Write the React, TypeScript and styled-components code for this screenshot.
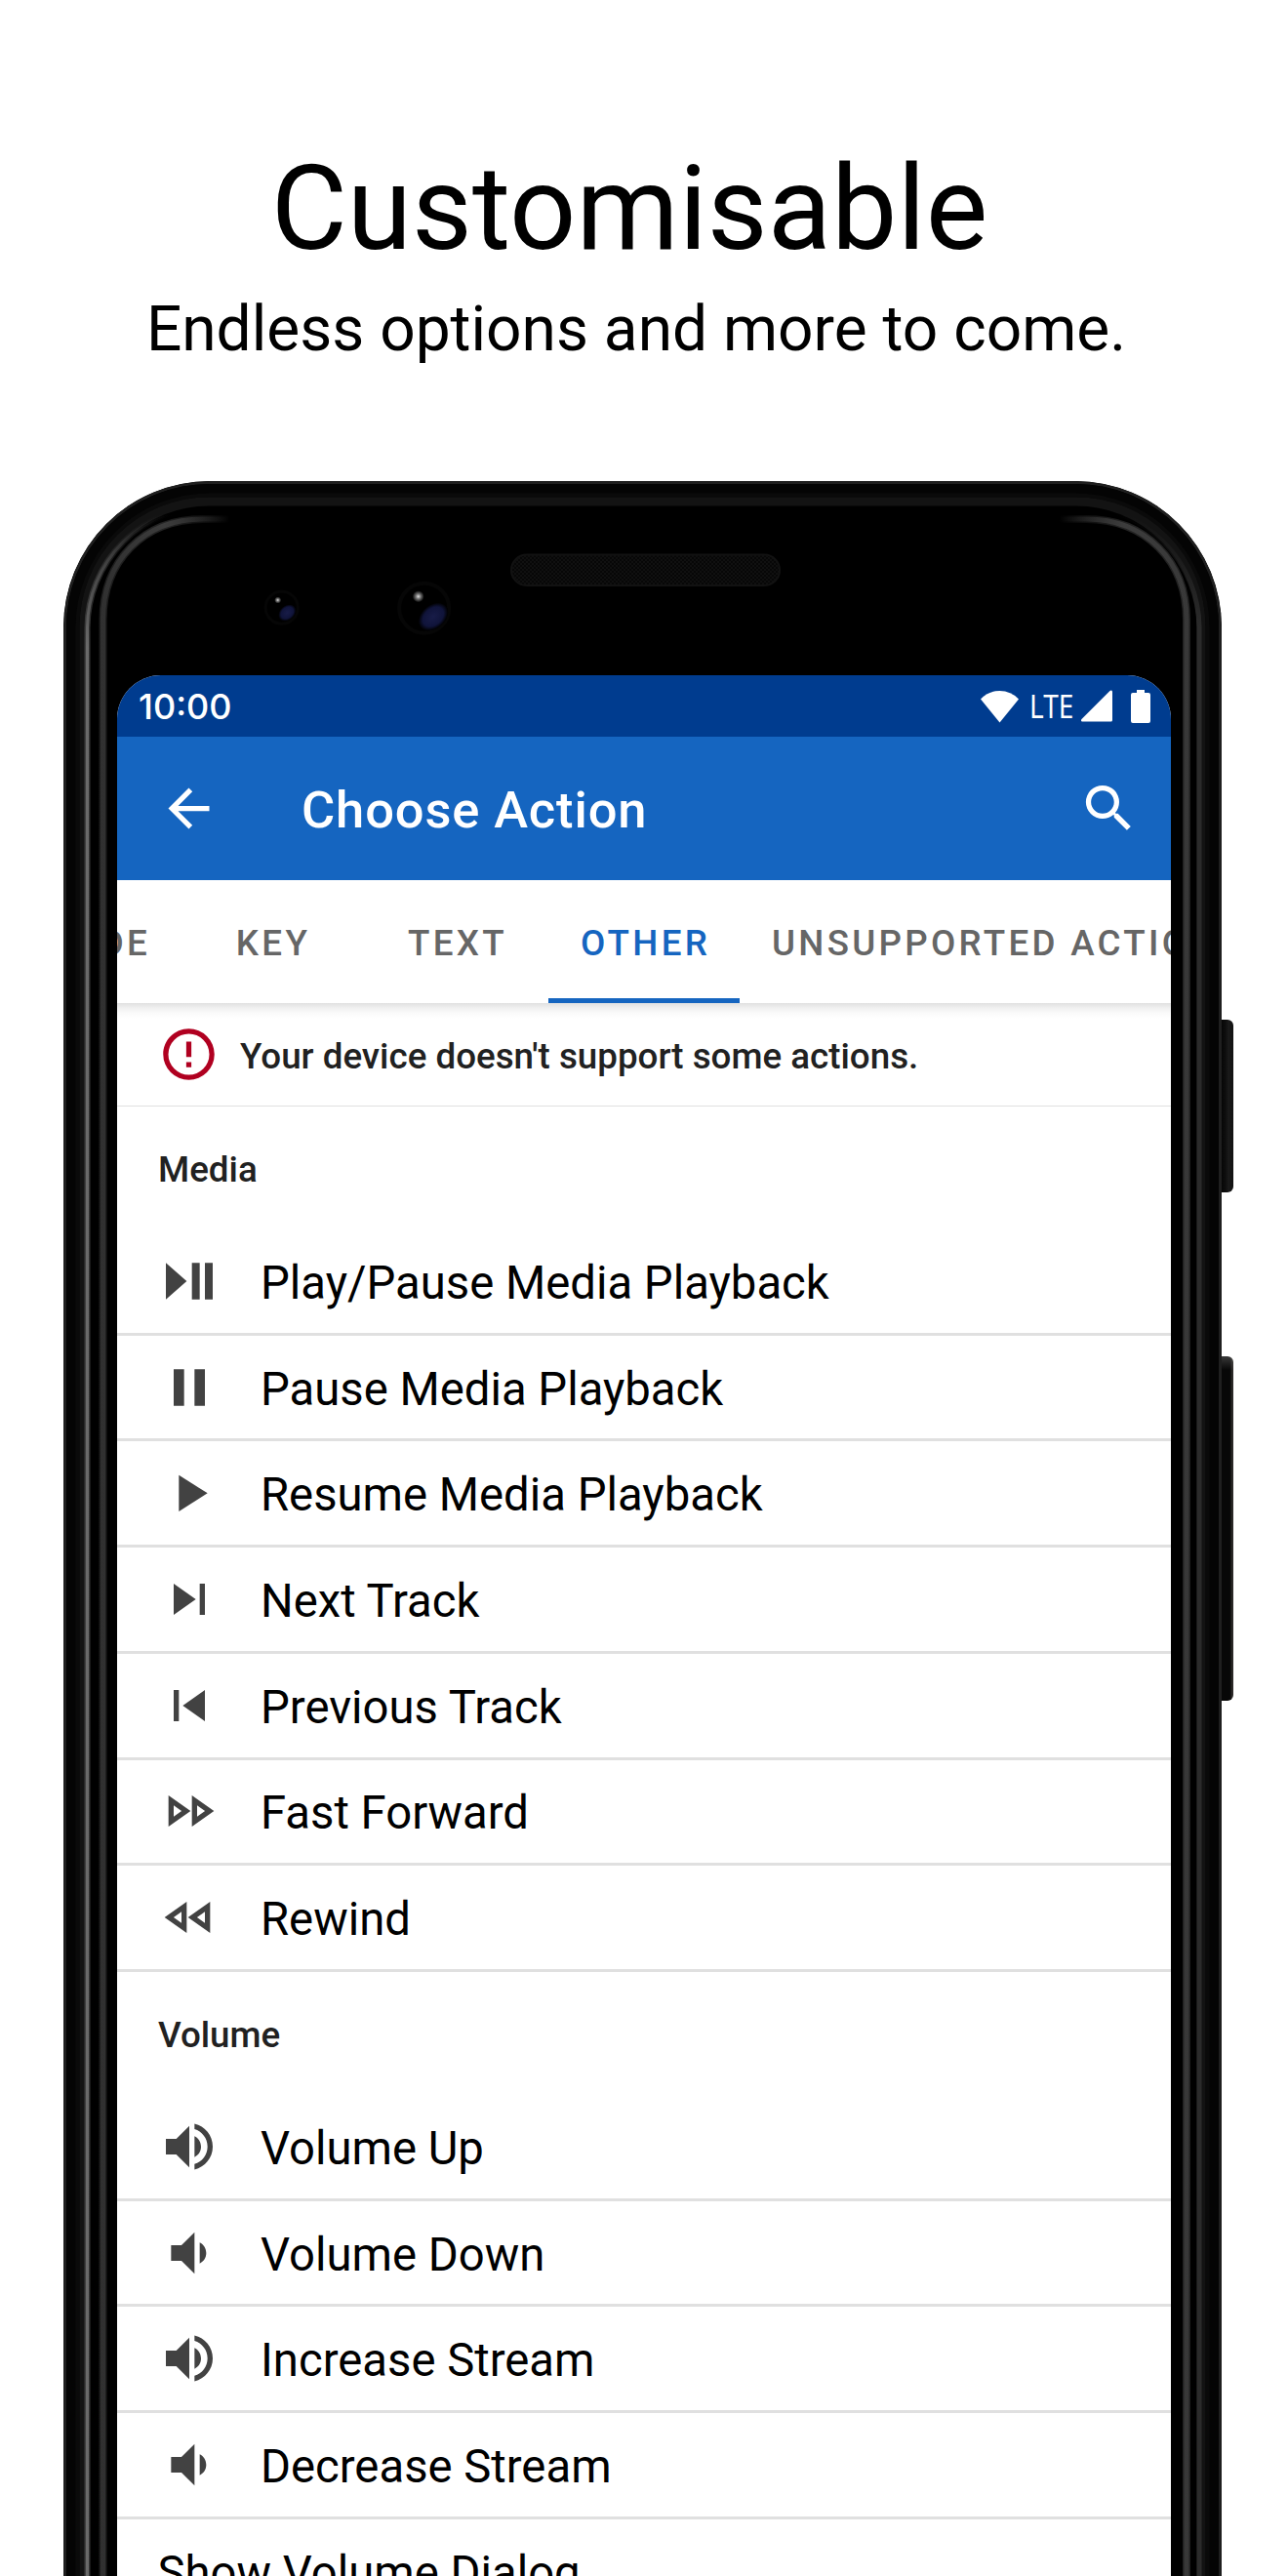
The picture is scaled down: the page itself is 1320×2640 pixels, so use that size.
import React from "react";
import styled, { createGlobalStyle } from "styled-components";

const Global = createGlobalStyle`
  *, *::before, *::after { box-sizing: border-box; }
  html, body { margin: 0; padding: 0; background: #fff; }
  body { font-family: Roboto, "Liberation Sans", sans-serif; }
`;

const Page = styled.main`
  width: 1320px;
  height: 2640px;
  overflow: hidden;
  background: #fff;
  display: flex;
  flex-direction: column;
`;

const Hero = styled.header`
  height: 493px;
  flex: none;
  padding-top: 144px;
  display: flex;
  flex-direction: column;
  align-items: center;
  color: #000;
`;

const HeroTitle = styled.h1`
  margin: 0;
  padding-right: 30px;
  font-size: 120px;
  line-height: 141px;
  font-weight: 400;
  white-space: nowrap;
`;

const HeroSubtitle = styled.p`
  margin: 15px 0 0;
  padding-right: 16px;
  font-size: 64px;
  line-height: 75px;
  white-space: nowrap;
`;

const Device = styled.div`
  display: flex;
  align-items: flex-start;
  padding-left: 65px;
`;

const Shell = styled.section`
  position: relative;
  flex: none;
  width: 1187px;
  height: 2400px;
  padding: 199px 52px 0 55px;
  border-radius: 150px 150px 0 0;
  overflow: hidden;
  background: #000;
`;

const Frame = styled.svg`
  position: absolute;
  left: 0;
  top: 0;
`;

const Buttons = styled.div`
  flex: none;
  display: flex;
  flex-direction: column;
  gap: 168px;
  padding-top: 552px;
`;

const SideButton = styled.span<{ $h: number; $lit?: boolean }>`
  width: 12px;
  height: ${(p) => p.$h}px;
  border-radius: 0 6px 6px 0;
  background: ${(p) =>
    p.$lit
      ? "linear-gradient(180deg, rgba(90,90,90,0.6), rgba(0,0,0,0) 14px), linear-gradient(90deg, #070707 70%, #2e2c2a 90%)"
      : "linear-gradient(90deg, #060606, #0d0d0d 30%, #1a1a1a 60%, #111 100%)"};
`;

const Screen = styled.div`
  position: relative;
  width: 1080px;
  height: 2201px;
  border-radius: 45px 45px 0 0;
  overflow: hidden;
  background: #fff;
  display: flex;
  flex-direction: column;
`;

const StatusBar = styled.div`
  flex: none;
  height: 63px;
  padding: 0 21px 0 22px;
  display: flex;
  align-items: center;
  justify-content: space-between;
  background: #003c8f;
  color: #fff;
`;

const Clock = styled.span`
  font-family: Inter, sans-serif;
  font-size: 36px;
  line-height: 42px;
  font-weight: 500;
  padding-top: 1px;
`;

const StatusIcons = styled.div`
  display: flex;
  align-items: center;
`;

const Network = styled.span`
  width: 63px;
  padding-left: 10px;
  font-family: "Noto Sans", sans-serif;
  font-size: 33px;
  line-height: 40px;
  & > span {
    display: inline-block;
    transform: scaleX(0.85);
    transform-origin: 0 50%;
  }
`;

const AppBar = styled.div`
  flex: none;
  height: 147px;
  padding: 0 32px 0 42px;
  display: flex;
  align-items: center;
  background: #1565c0;
  color: #fff;
`;

const AppTitle = styled.h2`
  margin: 0 0 0 84px;
  padding-top: 3px;
  flex: 1;
  font-size: 52.5px;
  line-height: 62px;
  font-weight: 500;
  letter-spacing: 0.85px;
`;

const Tabs = styled.nav`
  flex: none;
  height: 126px;
  display: flex;
  background: #fff;
`;

const Tab = styled.div<{ $w: number; $active?: boolean; $align?: string }>`
  flex: none;
  width: ${(p) => p.$w}px;
  padding: 2px 30px 0 33px;
  display: flex;
  align-items: center;
  justify-content: ${(p) => p.$align || "center"};
  font-size: 36.75px;
  font-weight: 500;
  letter-spacing: 3.28px;
  white-space: nowrap;
  color: ${(p) => (p.$active ? "#1565c0" : "#666")};
  box-shadow: ${(p) => (p.$active ? "inset 0 -5px #1565c0" : "none")};
`;

const Notice = styled.div`
  flex: none;
  height: 106px;
  padding: 0 42px;
  display: flex;
  align-items: center;
  gap: 21px;
  border-bottom: 1px solid #e0e0e0;
  background: linear-gradient(180deg, #e0e0e0, #f0f0f0 5px, #fafafa 10px, #fff 16px);
  font-size: 36.75px;
  font-weight: 500;
  color: #212121;
  & > span { padding-top: 4px; }
`;

const SectionTitle = styled.h3`
  flex: none;
  margin: 0;
  height: 126px;
  padding: 43px 42px 0;
  font-size: 36.75px;
  line-height: 43px;
  font-weight: 500;
  color: #212121;
`;

const Row = styled.div`
  flex: none;
  height: 108.72px;
  padding: 0 41.5px;
  display: flex;
  align-items: center;
  gap: 41.5px;
  border-bottom: 3px solid #e0e0e0;
  font-size: 47.25px;
  color: #000;
  white-space: nowrap;
  & > span { padding-top: 4px; }
`;

const Glyph = styled.svg`
  flex: none;
  fill: currentColor;
`;

const RowGlyph = styled(Glyph)`
  color: #424242;
`;

const paths = {
  back: "M20 11H7.83l5.59-5.59L12 4l-8 8 8 8 1.41-1.41L7.83 13H20v-2z",
  search:
    "M9.5 3A6.5 6.5 0 0 1 16 9.5c0 1.61-.59 3.09-1.56 4.23l.27.27h.79l5 5-1.5 1.5-5-5v-.79l-.27-.27A6.516 6.516 0 0 1 9.5 16 6.5 6.5 0 0 1 3 9.5 6.5 6.5 0 0 1 9.5 3m0 2C7 5 5 7 5 9.5S7 14 9.5 14 14 12 14 9.5 12 5 9.5 5z",
  alert:
    "M11 15h2v2h-2zm0-8h2v6h-2zm1-5C6.47 2 2 6.5 2 12a10 10 0 0 0 10 10 10 10 0 0 0 10-10A10 10 0 0 0 12 2m0 18a8 8 0 0 1-8-8 8 8 0 0 1 8-8 8 8 0 0 1 8 8 8 8 0 0 1-8 8z",
  playPause: "M3 5v14l8-7zM13 19h3V5h-3zM18 5v14h3V5z",
  pause: "M14 19h4V5h-4M6 19h4V5H6z",
  play: "M8 5.14v14l11-7z",
  next: "M16 18h2V6h-2M6 18l8.5-6L6 6z",
  previous: "M6 18V6h2v12H6m3.5-6L18 6v12z",
  forward: "M15 9.86 18.03 12 15 14.14V9.86m-9 0L9.03 12 6 14.14V9.86M13 6v12l8.5-6M4 6v12l8.5-6z",
  rewind: "M18 9.86v4.28L14.97 12 18 9.86m-9 0v4.28L5.97 12 9 9.86M20 6l-8.5 6 8.5 6V6zm-9 0l-8.5 6 8.5 6V6z",
  volumeUp:
    "M14 3.23v2.06c2.89.86 5 3.54 5 6.71s-2.11 5.84-5 6.7v2.07c4-.91 7-4.49 7-8.77s-3-7.86-7-8.77M16.5 12c0-1.77-1-3.29-2.5-4.03V16c1.5-.71 2.5-2.24 2.5-4M3 9v6h4l5 5V4L7 9z",
  volumeDown: "M5 9v6h4l5 5V4L9 9m9.5 3c0-1.77-1-3.29-2.5-4.03V16c1.5-.71 2.5-2.24 2.5-4z",
};

const sections: { title: string; rows: { label: string; icon?: keyof typeof paths }[] }[] = [
  {
    title: "Media",
    rows: [
      { label: "Play/Pause Media Playback", icon: "playPause" },
      { label: "Pause Media Playback", icon: "pause" },
      { label: "Resume Media Playback", icon: "play" },
      { label: "Next Track", icon: "next" },
      { label: "Previous Track", icon: "previous" },
      { label: "Fast Forward", icon: "forward" },
      { label: "Rewind", icon: "rewind" },
    ],
  },
  {
    title: "Volume",
    rows: [
      { label: "Volume Up", icon: "volumeUp" },
      { label: "Volume Down", icon: "volumeDown" },
      { label: "Increase Stream", icon: "volumeUp" },
      { label: "Decrease Stream", icon: "volumeDown" },
      { label: "Show Volume Dialog" },
    ],
  },
];

/* Outline of the shell inset by d, open at the bottom. */
const rim = (d: number, r: number) =>
  `M${d} 2400V${d + r}A${r} ${r} 0 0 1 ${d + r} ${d}H${1187 - d - r}A${r} ${r} 0 0 1 ${1187 - d} ${d + r}V2400`;

function PhoneFrame() {
  return (
    <Frame width="1187" height="2400" viewBox="0 0 1187 2400" fill="none">
      <defs>
        <linearGradient id="rimLeft" x1="170" y1="0" x2="37" y2="0" gradientUnits="userSpaceOnUse">
          <stop offset="0" stopColor="#3c3c3c" stopOpacity="0" />
          <stop offset="0.5" stopColor="#3c3c3c" />
          <stop offset="1" stopColor="#303030" />
        </linearGradient>
        <linearGradient id="rimRight" x1="1021" y1="0" x2="1154" y2="0" gradientUnits="userSpaceOnUse">
          <stop offset="0" stopColor="#3c3c3c" stopOpacity="0" />
          <stop offset="0.5" stopColor="#3c3c3c" />
          <stop offset="1" stopColor="#383838" />
        </linearGradient>
        <linearGradient id="edgeLeft" x1="0" y1="34" x2="0" y2="170" gradientUnits="userSpaceOnUse">
          <stop offset="0" stopColor="#444" stopOpacity="0" />
          <stop offset="0.4" stopColor="#444" />
          <stop offset="1" stopColor="#6a6a6a" />
        </linearGradient>
        <linearGradient id="edgeRight" x1="0" y1="34" x2="0" y2="150" gradientUnits="userSpaceOnUse">
          <stop offset="0" stopColor="#2b2b2b" stopOpacity="0" />
          <stop offset="1" stopColor="#2b2b2b" />
        </linearGradient>
        <radialGradient id="lens">
          <stop offset="0" stopColor="#181c48" />
          <stop offset="0.7" stopColor="#10143a" />
          <stop offset="1" stopColor="#000" />
        </radialGradient>
        <radialGradient id="glint">
          <stop offset="0" stopColor="#ddd" />
          <stop offset="0.4" stopColor="#777" />
          <stop offset="1" stopColor="#000" />
        </radialGradient>
        <pattern id="mesh" width="4" height="4" patternUnits="userSpaceOnUse">
          <rect width="4" height="4" fill="#070707" />
          <rect width="2" height="2" fill="#101010" />
          <rect x="2" y="2" width="2" height="2" fill="#101010" />
        </pattern>
      </defs>
      <path d={rim(1.5, 148)} stroke="#1f1f1f" strokeWidth="3" />
      <path d={rim(8, 142)} stroke="#040404" strokeWidth="10" />
      <path d={rim(14.5, 135)} stroke="#0a0a0a" strokeWidth="4" />
      <path d={rim(21, 128)} stroke="#131313" strokeWidth="9" />
      <path d="M24.500 2400V150A125 125 0 0 1 150 26" stroke="url(#edgeLeft)" strokeWidth="6" strokeOpacity="0.5" />
      <path d="M24.500 2400V150A125 125 0 0 1 150 26" stroke="url(#edgeLeft)" strokeWidth="3" />
      <path d="M1164 2400V150A125 125 0 0 0 1038 26" stroke="url(#edgeRight)" strokeWidth="5" />
      <path d="M40.500 2400V142C40.500 82 82 39 143 39H175" stroke="url(#rimLeft)" strokeWidth="8" strokeOpacity="0.6" />
      <path d="M40.500 2400V142C40.500 82 82 39 143 39H175" stroke="url(#rimLeft)" strokeWidth="5" />
      <path d="M1151 2400V142C1151 82 1109 39 1048 39H1016" stroke="url(#rimRight)" strokeWidth="8" strokeOpacity="0.6" />
      <path d="M1151 2400V142C1151 82 1109 39 1048 39H1016" stroke="url(#rimRight)" strokeWidth="5" />
      <rect x="459" y="75.500" width="275" height="31.500" rx="15.700" fill="url(#mesh)" stroke="#121212" strokeWidth="2" />
      <circle cx="223.700" cy="129.700" r="16.500" stroke="#060606" strokeWidth="3" />
      <ellipse cx="229.300" cy="135" rx="10" ry="7.500" fill="url(#lens)" transform="rotate(-40 229.300 135)" />
      <circle cx="219.700" cy="122" r="3.500" fill="url(#glint)" />
      <circle cx="369.700" cy="130.300" r="25.500" stroke="#060606" strokeWidth="4" />
      <ellipse cx="379" cy="139" rx="17" ry="12" fill="url(#lens)" transform="rotate(-40 379 139)" />
      <circle cx="363.700" cy="118.300" r="6" fill="url(#glint)" />
    </Frame>
  );
}

function Icon({ name, size = 63 }: { name: keyof typeof paths; size?: number }) {
  return (
    <Glyph width={size} height={size} viewBox="0 0 24 24">
      <path d={paths[name]} fillRule="evenodd" />
    </Glyph>
  );
}

export default function App() {
  return (
    <Page>
      <Global />
      <Hero>
        <HeroTitle>Customisable</HeroTitle>
        <HeroSubtitle>Endless options and more to come.</HeroSubtitle>
      </Hero>
      <Device>
        <Shell>
          <PhoneFrame />
          <Screen>
            <StatusBar>
              <Clock>10:00</Clock>
              <StatusIcons>
                <Glyph width="41" height="34" viewBox="0 0 41 34">
                  <path d="M20.500 33.500 1 9.500Q9 1 20.500 1T40 9.500z" />
                </Glyph>
                <Network>
                  <span>LTE</span>
                </Network>
                <Glyph width="32" height="33" viewBox="0 0 32 33">
                  <path d="M32 2v29a1.500 1.500 0 0 1-1.500 1.500H1.500c-1.500 0-2-1.500-1-2.500L29.500 1C30.500 0 32 .5 32 2z" />
                </Glyph>
                <Glyph width="39" height="34" viewBox="0 0 39 34">
                  <path d="M25 0h8v3h4q2 0 2 2v27q0 2-2 2H21q-2 0-2-2V5q0-2 2-2h4z" />
                </Glyph>
              </StatusIcons>
            </StatusBar>
            <AppBar>
              <Icon name="back" />
              <AppTitle>Choose Action</AppTitle>
              <Icon name="search" />
            </AppBar>
            <Tabs>
              <Tab $w={64} $align="flex-end">KEYCODE</Tab>
              <Tab $w={189}>KEY</Tab>
              <Tab $w={189}>TEXT</Tab>
              <Tab $w={196} $active>OTHER</Tab>
              <Tab $w={520} $align="flex-start">UNSUPPORTED ACTIONS</Tab>
            </Tabs>
            <Notice>
              <Glyph width="63" height="63" viewBox="0 0 24 24" color="#b00020">
                <path d={paths.alert} />
              </Glyph>
              <span>Your device doesn't support some actions.</span>
            </Notice>
            {sections.map((s) => (
              <React.Fragment key={s.title}>
                <SectionTitle>{s.title}</SectionTitle>
                {s.rows.map((r) => (
                  <Row key={r.label}>
                    {r.icon && (
                      <RowGlyph width="64" height="64" viewBox="0 0 24 24">
                        <path d={paths[r.icon]} fillRule="evenodd" />
                      </RowGlyph>
                    )}
                    <span>{r.label}</span>
                  </Row>
                ))}
              </React.Fragment>
            ))}
          </Screen>
        </Shell>
        <Buttons>
          <SideButton $h={177} />
          <SideButton $h={353} $lit />
        </Buttons>
      </Device>
    </Page>
  );
}
